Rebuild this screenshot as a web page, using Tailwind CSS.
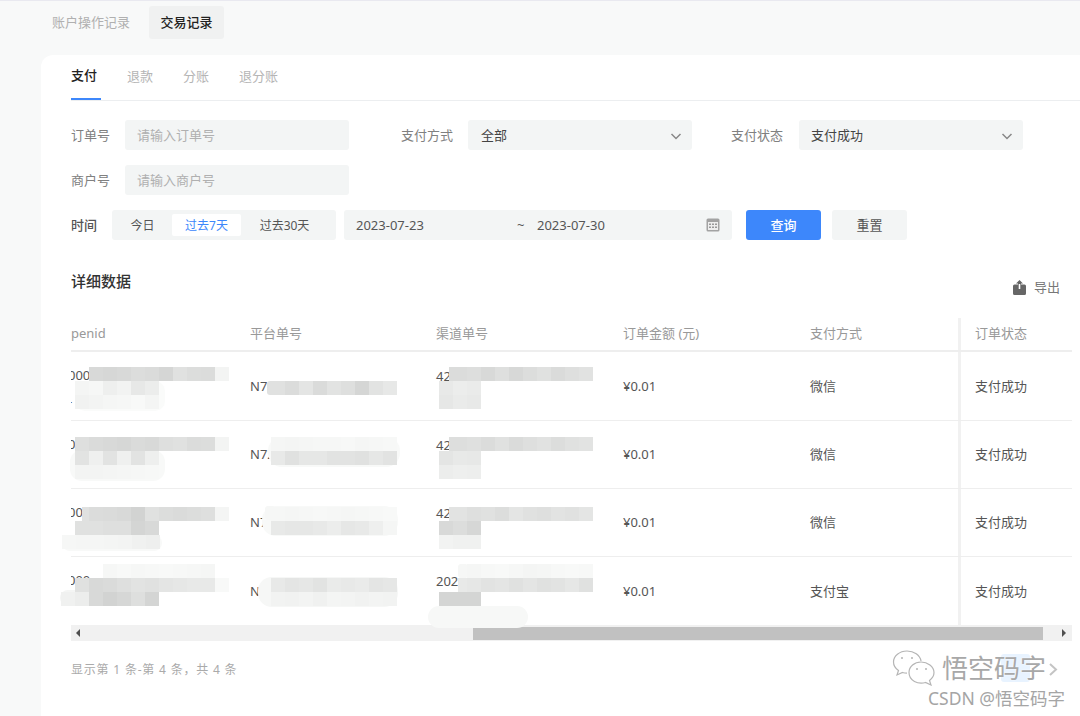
<!DOCTYPE html>
<html lang="zh-CN">
<head>
  <meta charset="UTF-8" />
  <title>交易记录</title>
  <script src="https://cdn.jsdelivr.net/npm/@tailwindcss/browser@4"></script>
</head>
<body class="bg-[#f8f9f9]">
  <div class="relative h-[716px] w-[1080px] overflow-hidden border-t border-[#e9e9f0] bg-[#f8f9f9] font-['Noto_Sans','Noto_Sans_CJK_SC',sans-serif] text-[13px] text-[#555]">

    <!-- top tabs -->
    <div class="flex h-[54px] items-start pl-[52px] pt-[5px]">
      <div class="flex h-[33px] items-center text-[#b0b0b0]">账户操作记录</div>
      <div class="ml-[19px] flex h-[33px] w-[75px] items-center justify-center rounded-[3px] bg-[#f0f1f1] font-medium text-[#222]">交易记录</div>
    </div>

    <!-- card -->
    <div class="ml-[41px] h-[662px] rounded-tl-xl bg-white pl-[30px]">
      <div class="flex h-[46px] gap-[30px] border-b border-[#eceef0] text-[#b5b5b5]">
        <div class="-mr-[4px] flex h-[45px] w-[30px] items-center border-b-2 border-[#3d87fb] pb-[1px] font-medium text-[#222]">支付</div>
        <div class="flex h-[43px] items-center">退款</div>
        <div class="flex h-[43px] items-center">分账</div>
        <div class="flex h-[43px] items-center">退分账</div>
      </div>

      <!-- filters -->
      <div class="mt-[19px] flex h-[30px] items-center">
        <span class="w-[54px] pt-[2px] text-[#808080]">订单号</span>
        <div class="flex h-[30px] w-[224px] items-center rounded-[3px] bg-[#f3f5f5] px-[12px] pt-[2px] text-[#b0b0b0]">请输入订单号</div>
        <span class="ml-[52px] w-[67px] pt-[2px] text-[#808080]">支付方式</span>
        <div class="flex h-[30px] w-[224px] items-center justify-between rounded-[3px] bg-[#f3f5f5] pl-[13px] pr-[10px] pt-[2px] text-[#444]">全部
          <svg class="h-3 w-3 text-[#888]" viewBox="0 0 12 12" fill="none" stroke="currentColor" stroke-width="1.5"><path d="M1.5 4l4.5 4.5L10.5 4" /></svg>
        </div>
        <span class="ml-[39px] w-[68px] pt-[2px] text-[#808080]">支付状态</span>
        <div class="flex h-[30px] w-[224px] items-center justify-between rounded-[3px] bg-[#f3f5f5] pl-[12px] pr-[10px] pt-[2px] text-[#444]">支付成功
          <svg class="h-3 w-3 text-[#888]" viewBox="0 0 12 12" fill="none" stroke="currentColor" stroke-width="1.5"><path d="M1.5 4l4.5 4.5L10.5 4" /></svg>
        </div>
      </div>
      <div class="mt-[15px] flex h-[30px] items-center">
        <span class="w-[54px] pt-[2px] text-[#808080]">商户号</span>
        <div class="flex h-[30px] w-[224px] items-center rounded-[3px] bg-[#f3f5f5] px-[12px] pt-[2px] text-[#b0b0b0]">请输入商户号</div>
      </div>
      <div class="mt-[15px] flex h-[30px] items-center">
        <span class="w-[41px] pt-[2px] font-medium text-[#555]">时间</span>
        <div class="flex h-[30px] w-[224px] items-center rounded-[3px] bg-[#f3f5f5] text-[12px] text-[#555]">
          <span class="w-[60px] pl-[1px] pt-[2px] text-center">今日</span>
          <span class="flex h-[22px] w-[69px] items-center justify-center rounded-[2px] bg-white pt-[2px] text-[#3d87fb]">过去7天</span>
          <span class="w-[85px] pl-[2px] pt-[2px] text-center">过去30天</span>
        </div>
        <div class="ml-[8px] flex h-[30px] w-[388px] items-center rounded-[3px] bg-[#f3f5f5] pl-[12px] pr-[12px] text-[#555]">
          <span class="w-[161px] pt-[2px]">2023-07-23</span>
          <span class="w-[20px] pt-[2px]">~</span>
          <span class="pt-[2px]">2023-07-30</span>
          <svg class="ml-auto h-[14px] w-[14px]" viewBox="0 0 14 14"><rect x="0.5" y="0.5" width="13" height="13" rx="1.5" fill="#a3a3a3" /><rect x="2" y="4" width="10" height="8" fill="#eee" /><g fill="#999"><rect x="3" y="5.5" width="2" height="1.5" /><rect x="6" y="5.5" width="2" height="1.5" /><rect x="9" y="5.5" width="2" height="1.5" /><rect x="3" y="8.5" width="2" height="1.5" /><rect x="6" y="8.5" width="2" height="1.5" /><rect x="9" y="8.5" width="2" height="1.5" /></g></svg>
        </div>
        <button class="ml-[14px] h-[30px] w-[75px] rounded-[3px] bg-[#3d87fb] pt-[2px] font-medium text-white">查询</button>
        <button class="ml-[11px] h-[30px] w-[75px] rounded-[3px] bg-[#f3f5f5] pt-[2px] text-[#555]">重置</button>
      </div>

      <!-- detail header -->
      <div class="mr-[20px] mt-[29px] flex h-[28px] items-center justify-between">
        <h2 class="pb-[4px] text-[15px] font-medium text-[#333]">详细数据</h2>
        <div class="mt-[9px] flex items-center gap-[8px] text-[#777]">
          <svg class="h-[15px] w-[13px]" viewBox="0 0 13 15" fill="#666"><path d="M6.5 0L10 3.5H8V4.5H11.5Q13 4.5 13 6V13.500Q13 15 11.500 15H1.500Q0 15 0 13.500V6Q0 4.500 1.500 4.500H5V3.500H3Z" /><rect x="5.700" y="4" width="1.600" height="5" fill="#fff" /></svg>
          <span>导出</span>
        </div>
      </div>

      <!-- table -->
      <div class="mt-[21px] w-[1001px]">
        <div class="grid h-[34px] grid-cols-[179px_186px_187px_187px_148px_114px] items-center border-b-2 border-[#eeeeee] text-[#999]">
          <span class="pb-[1px]">penid</span><span>平台单号</span><span>渠道单号</span><span>订单金额 (元)</span><span>支付方式</span>
          <span class="flex h-full items-center border-l-[3px] border-[#f1f1f1] pl-[14px]">订单状态</span>
        </div>
        <div class="grid h-[69px] grid-cols-[179px_186px_187px_187px_148px_114px] items-center border-b border-[#eeeeee]">
          <span class="overflow-hidden pt-[4px] leading-[26px]"><span class="-ml-[3px] block">000<br />-</span></span><span class="pt-[1px]">N71</span><span class="pb-[18px]">4200</span><span class="pt-[1px]">¥0.01</span><span class="pt-[1px]">微信</span>
          <span class="flex h-full items-center border-l-[3px] border-[#f1f1f1] pl-[14px] pt-[1px]">支付成功</span>
        </div>
        <div class="grid h-[68px] grid-cols-[179px_186px_187px_187px_148px_114px] items-center border-b border-[#eeeeee]">
          <span class="overflow-hidden pb-[20px]"><span class="-ml-[3px] block">000</span></span><span class="pt-[1px]">N72</span><span class="pb-[18px]">4200</span><span class="pt-[1px]">¥0.01</span><span class="pt-[1px]">微信</span>
          <span class="flex h-full items-center border-l-[3px] border-[#f1f1f1] pl-[14px] pt-[1px]">支付成功</span>
        </div>
        <div class="grid h-[68px] grid-cols-[179px_186px_187px_187px_148px_114px] items-center border-b border-[#eeeeee]">
          <span class="overflow-hidden pb-[20px]"><span class="-ml-[3px] block">000</span></span><span class="pt-[1px]">N7</span><span class="pb-[18px]">4200</span><span class="pt-[1px]">¥0.01</span><span class="pt-[1px]">微信</span>
          <span class="flex h-full items-center border-l-[3px] border-[#f1f1f1] pl-[14px] pt-[1px]">支付成功</span>
        </div>
        <div class="grid h-[68px] grid-cols-[179px_186px_187px_187px_148px_114px] items-center">
          <span class="overflow-hidden pb-[20px]"><span class="-ml-[3px] block">000</span></span><span class="pt-[1px]">N7</span><span class="pb-[18px]">202</span><span class="pt-[1px]">¥0.01</span><span class="pt-[1px]">支付宝</span>
          <span class="flex h-full items-center border-l-[3px] border-[#f1f1f1] pl-[14px] pt-[1px]">支付成功</span>
        </div>

        <!-- scrollbar -->
        <div class="flex h-[16px] items-center bg-[#f1f1f1]">
          <svg class="ml-[5px] h-2 w-1" viewBox="0 0 4 8" fill="#505050"><path d="M4 0L0 4l4 4z" /></svg>
          <div class="ml-[393px] h-[13px] w-[570px] bg-[#c1c1c1]"></div>
          <svg class="ml-[19px] h-2 w-1" viewBox="0 0 4 8" fill="#505050"><path d="M0 0l4 4-4 4z" /></svg>
        </div>
      </div>

      <div class="mt-[20px] text-[12px] tracking-[0.8px] text-[#aaa]">显示第 1 条-第 4 条，共 4 条</div>
    </div>

    <!-- mosaic over the table, drawn from data below -->
    <div id="mosaic" class="pointer-events-none absolute -top-px left-0"></div>

    <!-- watermark -->
    <div class="absolute left-[1001px] top-[653px] h-[28px] w-[29px] rounded-[3px] bg-[#e8f3ff]"></div>
    <svg class="absolute left-[892px] top-[649px] h-[36px] w-[44px]" viewBox="0 0 44 36" fill="none" stroke="#b5b5b5" stroke-width="1.200">
      <path d="M15 1C7.500 1 1.500 6 1.500 12C1.500 15.500 3.500 18.500 6.500 20.500L5 25L10.500 22.500C12 23 13.500 23.200 15 23.200" />
      <path d="M15 1C22 1 28 5 29 11" />
      <path d="M29 12C35.500 12 42 16.500 42 22.500C42 26 40 28.500 37.500 30.500L39 35L33.500 32.500C26 34.500 17 31 17 22.500C17 16.500 22.500 12 29 12Z" fill="#fff" />
      <circle cx="10" cy="8" r="1" fill="#b5b5b5" stroke="none" /><circle cx="20" cy="8" r="1" fill="#b5b5b5" stroke="none" />
      <circle cx="25" cy="19" r="1" fill="#b5b5b5" stroke="none" /><circle cx="34" cy="19" r="1" fill="#b5b5b5" stroke="none" />
    </svg>
    <div class="absolute left-[942px] top-[648px] text-[26px] leading-[38px] text-[#a8a8a8] [text-shadow:0_0_2px_#fff]">悟空码字</div>
    <svg class="absolute left-[1048px] top-[661px] h-[15px] w-[10px]" viewBox="0 0 10 15" fill="none" stroke="#c4c4c4" stroke-width="2"><path d="M2 2l6 5.500-6 5.500" /></svg>
    <div class="absolute left-[928px] top-[686px] text-[17.5px] leading-[22px] text-[#a5a5a5] [text-shadow:0_0_2px_#fff]">CSDN @悟空码字</div>
  </div>

  <script>
    // blobs: [x, y, w, h, grey, radius]; patches: [x, y, greys...] in 14px cells
    const blobs = [
      [75, 381, 90, 30, 250, 10], [70, 450, 95, 31, 248, 12], [62, 535, 100, 16, 248, 10],
      [60, 590, 30, 16, 244, 8], [268, 437, 132, 30, 248, 14], [262, 506, 136, 30, 248, 14],
      [258, 577, 140, 30, 246, 14], [428, 606, 100, 22, 247, 12],
      [267, 381, 10, 14, 224, 3], [265, 506, 10, 14, 246, 3], [82, 507, 10, 14, 224, 0],
      [449, 367, 6, 14, 219, 0], [449, 437, 6, 14, 221, 0], [449, 507, 6, 14, 226, 0],
      [458, 564, 10, 14, 246, 3], [458, 578, 10, 14, 232, 0]
    ];
    const patches = [
      [89, 367, 216, 214, 216, 220, 218, 213, 224, 220, 219], [215, 367, 243],
      [75, 381, 244, 246, 238, 242, 231, 236], [75, 395, 241, 243, 245, 246, 248, 244],
      [271, 381, 224, 219, 228, 218, 226, 222, 213, 226, 231],
      [453, 367, 219, 221, 216, 222, 215, 220, 224, 218, 222, 225],
      [439, 381, 232, 236, 234], [439, 395, 230, 234, 232],

      [75, 437, 222, 218, 216, 214, 218, 216, 222, 224, 219, 220], [215, 437, 243],
      [75, 451, 226, 239, 226, 239, 226, 238], [75, 465, 243, 243, 244, 245, 246, 247],
      [271, 437, 245, 244, 245, 246, 246, 247, 245, 246, 247], [271, 451, 232, 224, 230, 230, 226, 226, 224, 230, 226],
      [453, 437, 221, 223, 219, 224, 218, 222, 225, 220, 224, 226],
      [439, 451, 228, 232, 231], [439, 465, 236, 238, 237],

      [89, 507, 219, 218, 216, 210, 224, 220, 218, 220, 222], [215, 507, 244],
      [75, 521, 224, 224, 222, 222, 212, 216], [62, 535, 246, 245, 245, 244, 243, 240, 238],
      [271, 507, 246, 245, 246, 247, 246, 245, 246, 247, 248], [271, 521, 232, 230, 230, 232, 236, 230, 232, 238, 245],
      [453, 507, 226, 222, 224, 220, 228, 224, 222, 226, 224, 228],
      [439, 521, 216, 220, 214], [439, 535, 242, 240, 240],

      [103, 564, 246, 248, 246, 247, 248, 247, 246, 245], [75, 578, 224, 216, 218, 222, 226, 224, 228, 230, 232, 232], [215, 578, 248],
      [61, 592, 240, 236, 216, 210, 214, 222, 212], [271, 578, 232, 228, 230, 226, 234, 232, 234, 228, 230], [271, 592, 242, 241, 243, 240, 244, 243, 241, 243, 242],
      [467, 564, 245, 247, 248, 246, 244, 245, 247, 248, 247], [467, 578, 230, 226, 228, 224, 228, 224, 226, 230, 224],
      [439, 592, 212, 212, 212]
    ];
    const mosaic = document.getElementById('mosaic');
    function add(x, y, w, h, g, r) {
      const el = document.createElement('div');
      el.style.cssText = `position:absolute;left:${x}px;top:${y}px;width:${w}px;height:${h}px;background:rgb(${g},${g + 1},${g});border-radius:${r}px`;
      mosaic.appendChild(el);
    }
    blobs.forEach(b => add(...b));
    patches.forEach(([x, y, ...greys]) => greys.forEach((g, i) => add(x + i * 14, y, 14, 14, g, 0)));
  </script>
</body>
</html>
